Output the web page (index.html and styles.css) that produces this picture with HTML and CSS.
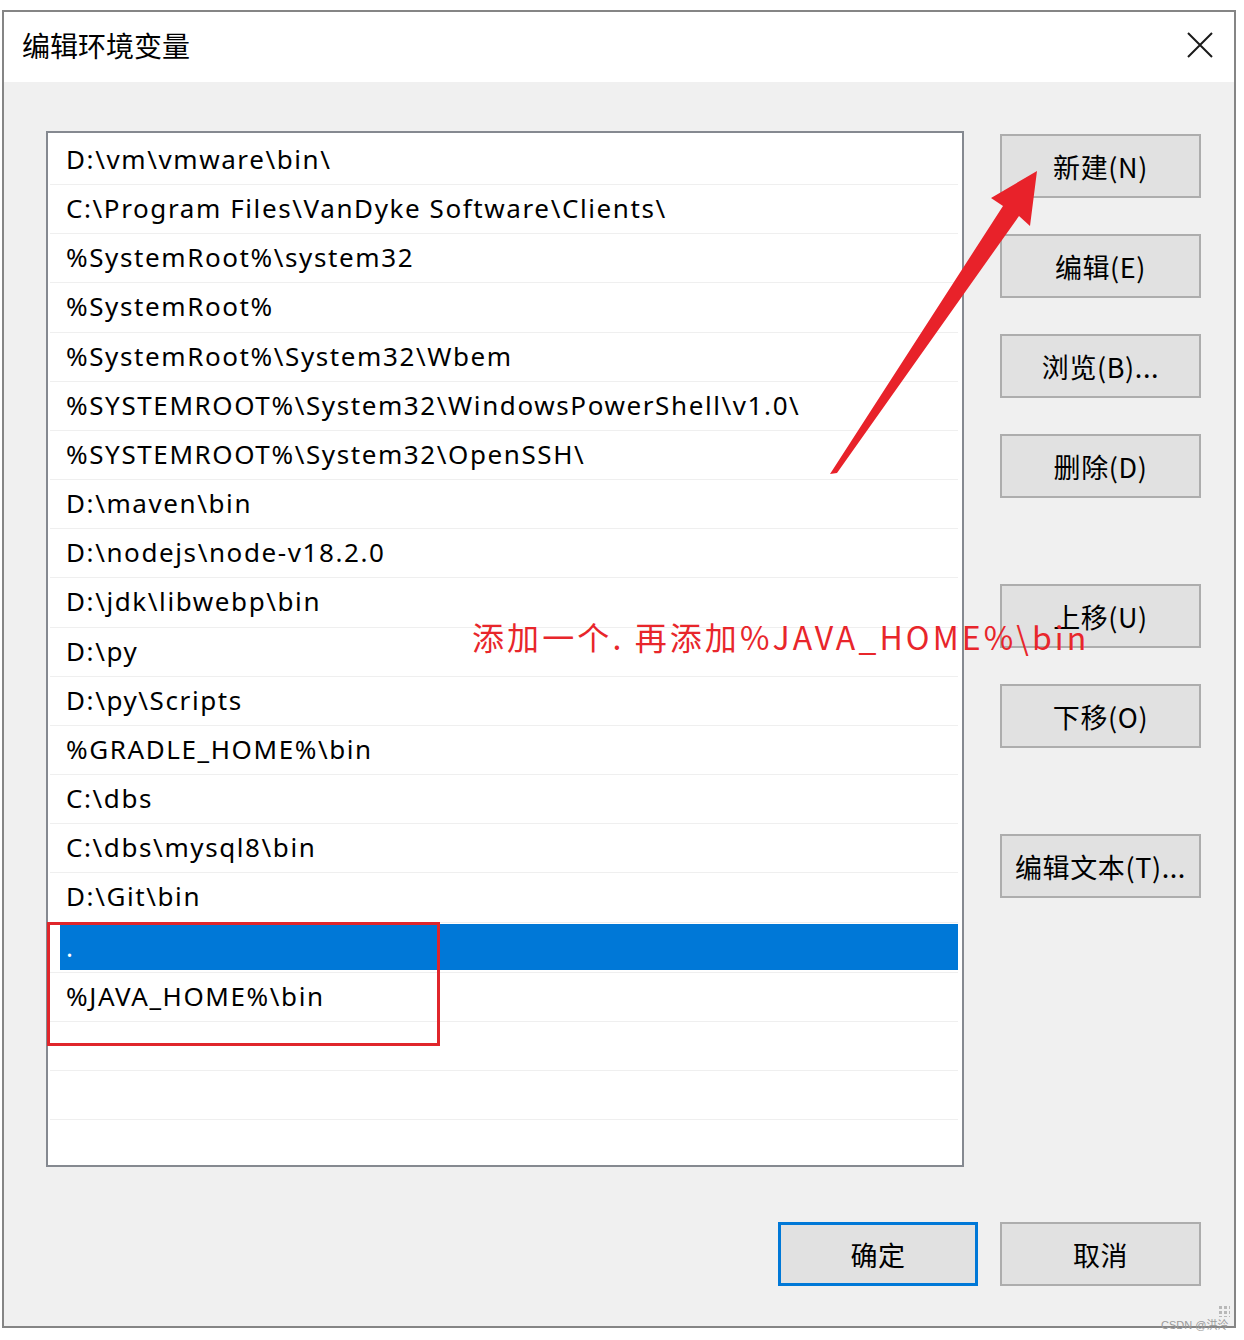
FILE: index.html
```html
<!DOCTYPE html>
<html lang="zh-CN">

<head>
    <meta charset="UTF-8">
    <meta name="viewport" content="width=device-width, initial-scale=1.0">
    <title>编辑环境变量</title>
    <link rel="stylesheet" href="styles.css">
</head>

<body>
    <div class="dialog">
        <div class="titlebar">
            <span class="title">编辑环境变量</span>
            <svg class="close" width="28" height="28" viewBox="0 0 28 28">
                <path d="M2 2 L26 26 M26 2 L2 26" stroke="#1a1a1a" stroke-width="2" fill="none" />
            </svg>
        </div>

        <div class="content">
            <div class="main">
                <ul class="pathlist">
                    <li class="row"><span class="item">D:\vm\vmware\bin\</span></li>
                    <li class="row"><span class="item">C:\Program Files\VanDyke Software\Clients\</span></li>
                    <li class="row"><span class="item">%SystemRoot%\system32</span></li>
                    <li class="row"><span class="item">%SystemRoot%</span></li>
                    <li class="row"><span class="item">%SystemRoot%\System32\Wbem</span></li>
                    <li class="row"><span class="item">%SYSTEMROOT%\System32\WindowsPowerShell\v1.0\</span></li>
                    <li class="row"><span class="item">%SYSTEMROOT%\System32\OpenSSH\</span></li>
                    <li class="row"><span class="item">D:\maven\bin</span></li>
                    <li class="row"><span class="item">D:\nodejs\node-v18.2.0</span></li>
                    <li class="row"><span class="item">D:\jdk\libwebp\bin</span></li>
                    <li class="row"><span class="item">D:\py</span></li>
                    <li class="row"><span class="item">D:\py\Scripts</span></li>
                    <li class="row"><span class="item">%GRADLE_HOME%\bin</span></li>
                    <li class="row"><span class="item">C:\dbs</span></li>
                    <li class="row"><span class="item">C:\dbs\mysql8\bin</span></li>
                    <li class="row"><span class="item">D:\Git\bin</span></li>
                    <li class="row selected"><span class="item">.</span></li>
                    <li class="row"><span class="item">%JAVA_HOME%\bin</span></li>
                    <li class="row"><span class="item"></span></li>
                    <li class="row"><span class="item"></span></li>
                    <li class="row"><span class="item"></span></li>
                </ul>

                <div class="actions">
                    <button class="btn">新建(N)</button>
                    <button class="btn">编辑(E)</button>
                    <button class="btn">浏览(B)...</button>
                    <button class="btn">删除(D)</button>
                    <button class="btn group-start">上移(U)</button>
                    <button class="btn">下移(O)</button>
                    <button class="btn group-start">编辑文本(T)...</button>
                </div>
            </div>

            <div class="footer">
                <button class="btn default">确定</button>
                <button class="btn">取消</button>
            </div>
        </div>
    </div>

    <!-- annotations drawn over the screenshot -->
    <div class="mark-box"></div>
    <svg class="arrow" width="1244" height="500" viewBox="0 0 1244 500">
        <polygon fill="#e8222a"
            points="830,474 1003,206 991,198 1037,171 1030,226 1019,216 837,473" />
    </svg>
    <div class="note">添加一个. 再添加%JAVA_HOME%\bin</div>
    <div class="grip"></div>
    <div class="watermark">CSDN @洪泠</div>
</body>

</html>
```

FILE: styles.css
```css
/* Global styles */

body {
    margin: 0;
    background-color: #fff;
    font-family: "Noto Sans", "Noto Sans CJK SC", sans-serif;
    color: #000;
}

/* Dialog frame */

.dialog {
    margin: 10px 0 0 2px;
    width: 1234px;
    height: 1318px;
    box-sizing: border-box;
    border: 2px solid #858585;
    background-color: #f0f0f0;
    display: flex;
    flex-direction: column;
}

.titlebar {
    height: 70px;
    background-color: #fff;
    display: flex;
    align-items: center;
    justify-content: space-between;
    padding: 0 20px 0 18px;
    flex-shrink: 0;
}

.title {
    font-family: "Noto Sans CJK SC", sans-serif;
    font-size: 28px;
    margin-top: -4px;
}

.close {
    margin-top: -4px;
}

/* Body */

.content {
    padding: 49px 33px 0 42px;
}

.main {
    display: grid;
    grid-template-columns: 918px 201px;
    column-gap: 36px;
}

.pathlist {
    list-style: none;
    margin: 0;
    height: 1036px;
    box-sizing: border-box;
    padding: 3px 2px 0 2px;
    border: 2px solid #858990;
    background-color: #fff;
    overflow: hidden;
}

.row {
    height: 49.16px;
    box-sizing: border-box;
    border-bottom: 1px solid #efefef;
    margin-right: 2px;
    padding-left: 10px;
}

.item {
    display: block;
    height: 46px;
    line-height: 46px;
    padding-left: 6px;
    font-size: 26px;
    letter-spacing: 1.6px;
    white-space: nowrap;
}

.row.selected .item {
    background-color: #0078d7;
    color: #fff;
    margin-top: 1px;
}

/* Buttons */

.actions {
    display: flex;
    flex-direction: column;
    gap: 36px;
    padding-top: 3px;
}

.btn {
    width: 201px;
    height: 64px;
    box-sizing: border-box;
    background-color: #e1e1e1;
    border: 2px solid #adadad;
    font-family: "Noto Sans CJK SC", sans-serif;
    font-size: 27px;
    letter-spacing: 0.6px;
    color: #000;
    padding: 0;
}

.btn.group-start {
    margin-top: 50px;
}

.btn.default {
    width: 200px;
    border: 3px solid #0078d7;
}

.footer {
    display: flex;
    justify-content: flex-end;
    gap: 22px;
    margin-top: 55px;
}

/* Annotations */

.mark-box {
    position: absolute;
    left: 47px;
    top: 922px;
    width: 393px;
    height: 124px;
    box-sizing: border-box;
    border: 3px solid #e0262b;
}

.arrow {
    position: absolute;
    left: 0;
    top: 0;
}

.note {
    position: absolute;
    left: 472px;
    top: 612px;
    font-family: "Noto Sans CJK SC", sans-serif;
    font-size: 32px;
    letter-spacing: 3.1px;
    line-height: 48px;
    color: #e8262b;
    white-space: nowrap;
}

.grip {
    position: absolute;
    left: 1218px;
    top: 1305px;
    width: 12px;
    height: 12px;
    background-image: radial-gradient(#b8b8b8 1.5px, transparent 2px);
    background-size: 5px 5px;
}

.watermark {
    position: absolute;
    left: 1161px;
    top: 1316px;
    font-family: "Liberation Sans", "Noto Sans CJK SC", sans-serif;
    font-size: 11px;
    color: #9a9a9a;
}
```
